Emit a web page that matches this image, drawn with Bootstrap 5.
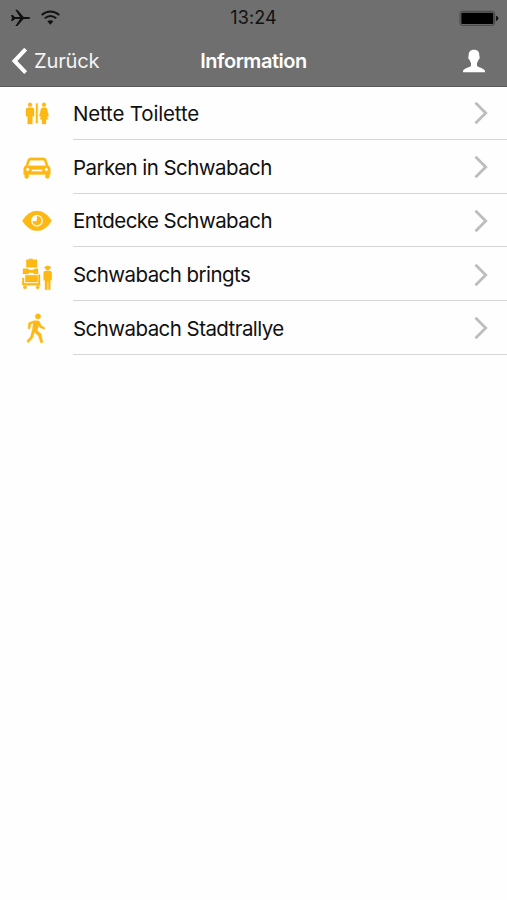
<!DOCTYPE html>
<html lang="de">
<head>
<meta charset="utf-8">
<meta name="viewport" content="width=device-width, initial-scale=1">
<title>Information</title>
<link href="https://cdn.jsdelivr.net/npm/bootstrap@5.3.0/dist/css/bootstrap.min.css" rel="stylesheet">
<style>
  body { font-family: Inter, "Liberation Sans", sans-serif; background: #fefefe; color: #111; height: 900px; overflow: hidden; }
  svg { display: block; flex: none; }
  .app-header { background: #6f6f6f; height: 87px; border-bottom: 1px solid #5a5a5a; }
  .status-bar { height: 34px; color: #111; }
  .status-time { font-size: 18px; line-height: 36px; letter-spacing: .1px; }
  .title-bar { height: 52px; color: #fff; }
  .back-link { font-size: 20.2px; line-height: 54px; letter-spacing: -.25px; color: #f4f4f4; }
  .page-title { font-size: 20px; line-height: 54px; font-weight: 600; letter-spacing: -.45px; }
  .menu-list { margin-top: -1px; }
  .menu-row { height: 53.75px; padding-left: 15px; color: #111; }
  .menu-row svg.glyph { fill: #fdb813; stroke: #fdb813; stroke-width: 1; margin-top: 2px; }
  .menu-text { margin-left: 13px; height: 53.75px; border-bottom: 1.5px solid #d6d6d6; font-size: 20.5px; line-height: 55px; padding: 2px 18px 0 0; }
  .menu-text span { letter-spacing: -.56px; white-space: nowrap; }
  .menu-row:first-child span { letter-spacing: -.16px; }
</style>
</head>
<body>
<header class="app-header">
  <div class="status-bar row g-0 align-items-center">
    <div class="col d-flex align-items-center">
      <svg width="75" height="34" viewBox="0 0 225 102" fill="#111">
        <path d="M33 42h5l7 6h15L46 26h6l19 22h12q8 0 8 3t-8 3H71L52 75h-6l14-21H45l-7 6h-5l3-9z"/>
        <g fill="none" stroke="#111" stroke-width="5.5"><path d="M125 42q26-21 53 0"/><path d="M134 52q17-14 35 0"/></g>
        <path d="M142 61q9-7 18 0l-9 10z"/>
      </svg>
    </div>
    <div class="col-auto status-time">13:24</div>
    <div class="col d-flex justify-content-end">
      <svg width="67" height="34" viewBox="0 0 201 102"><rect x="60" y="31" width="104" height="42" rx="7" fill="none" stroke="#444" stroke-width="3"/><rect x="64" y="35" width="96" height="34" rx="3" fill="#000"/><path d="M168 44q7 2 7 8t-7 8z" fill="#111"/></svg>
    </div>
  </div>
  <div class="title-bar row g-0 align-items-center">
    <div class="col d-flex align-items-center">
      <svg width="34" height="52" viewBox="0 34.8 34 52" fill="none" stroke="#fff" stroke-width="4"><path d="M25.7 49 14.5 60.8l11.2 11.7"/></svg>
      <span class="back-link">Zurück</span>
    </div>
    <h1 class="col-auto page-title m-0">Information</h1>
    <div class="col d-flex justify-content-end">
      <svg width="67" height="52" viewBox="0 104 201 156" fill="#fff"><path d="M102 148c12 0 17 8 16 20 3 2 1 9-3 11-1 5-3 7-4 9v8c3 6 24 7 24 17v3H69v-3c0-10 21-11 24-17v-8c-1-2-3-4-4-9-4-2-6-9-3-11-1-12 4-20 16-20z"/></svg>
    </div>
  </div>
</header>
<main class="menu-list d-flex flex-column">
  <a class="menu-row d-flex align-items-center text-decoration-none" href="#">
    <svg class="glyph" width="45" height="40" viewBox="0 -4 135 120"><circle cx="45" cy="28" r="6"/><path d="M39 37h12q6 0 6 6v20h-5v23H38V63h-5V43q0-6 6-6z"/><rect x="63" y="24" width="5" height="60" rx="2"/><circle cx="87" cy="28" r="6"/><path d="M83 37h8q4 0 5 4l5 21-5 2 3 8h-6v14H81V72h-6l3-8-5-2 5-21q1-4 5-4z"/></svg>
    <div class="menu-text flex-grow-1 d-flex justify-content-between align-items-center"><span>Nette Toilette</span><svg width="18" height="26" viewBox="0 0 18 26" fill="none" stroke="#bdbdbd" stroke-width="2.8"><path d="m4.5 2.8 10.2 10.2-10.2 10.2"/></svg></div>
  </a>
  <a class="menu-row d-flex align-items-center text-decoration-none" href="#">
    <svg class="glyph" width="45" height="40" viewBox="0 -2.6 135 120"><path fill-rule="evenodd" d="M46 27h40q5 0 8 6l6 18q6 2 6 9v17h-3v7q0 5-6 5t-6-5v-7H41v7q0 5-6 5t-6-5v-7h-3V60q0-7 6-9l6-18q3-6 8-6zm2 7q-3 0-4 3l-5 14h54l-5-14q-1-3-4-3zM38 57a5 5 0 100 10 5 5 0 000-10zm56 0a5 5 0 100 10 5 5 0 000-10zM50 62v6h32v-6z"/></svg>
    <div class="menu-text flex-grow-1 d-flex justify-content-between align-items-center"><span>Parken in Schwabach</span><svg width="18" height="26" viewBox="0 0 18 26" fill="none" stroke="#bdbdbd" stroke-width="2.8"><path d="m4.5 2.8 10.2 10.2-10.2 10.2"/></svg></div>
  </a>
  <a class="menu-row d-flex align-items-center text-decoration-none" href="#">
    <svg class="glyph" width="45" height="40" viewBox="0 -3 135 120"><path fill-rule="evenodd" d="M22 56Q40 27 66 27t44 29Q92 86 66 86T22 56zM66 38a18 18 0 100 36 18 18 0 000-36z"/><path d="M66 43v12q0 3-3 3H53a13 13 0 1013-15z"/></svg>
    <div class="menu-text flex-grow-1 d-flex justify-content-between align-items-center"><span>Entdecke Schwabach</span><svg width="18" height="26" viewBox="0 0 18 26" fill="none" stroke="#bdbdbd" stroke-width="2.8"><path d="m4.5 2.8 10.2 10.2-10.2 10.2"/></svg></div>
  </a>
  <a class="menu-row d-flex align-items-center text-decoration-none" href="#">
    <svg class="glyph" width="45" height="40" viewBox="0 -1 135 120"><path d="M34 13h7l3-4 3 4 4-4 3 4h12v23H34zM24 40h15l4 4h12l4-4h10v16H58l-4-4H43l-4 4H24zM31 60h37v20H31zM22 84h53v6H22zM22 68h5v20h-5zM70 58h5v31h-5z"/><circle cx="30" cy="96" r="5"/><circle cx="68" cy="96" r="5"/><circle cx="98" cy="38" r="7"/><path d="M88 35h20v3H88zM91 47h14q5 0 5 6v22h-4v28h-6V79h-3v24h-7V75h-4V53q0-6 5-6z"/></svg>
    <div class="menu-text flex-grow-1 d-flex justify-content-between align-items-center"><span>Schwabach bringts</span><svg width="18" height="26" viewBox="0 0 18 26" fill="none" stroke="#bdbdbd" stroke-width="2.8"><path d="m4.5 2.8 10.2 10.2-10.2 10.2"/></svg></div>
  </a>
  <a class="menu-row d-flex align-items-center text-decoration-none" href="#">
    <svg class="glyph" width="45" height="40" viewBox="0 1 135 120"><circle cx="69" cy="23" r="8"/><path d="M57 36h10q5 0 7 4l5 11 11 6-2 5-13-5-4-7-4 16 11 9 6 26-7 2-7-22-12-10-5 17-13 14-5-5 11-12 6-22 3-20-7 3-3 14h-6l2-18z"/></svg>
    <div class="menu-text flex-grow-1 d-flex justify-content-between align-items-center"><span>Schwabach Stadtrallye</span><svg width="18" height="26" viewBox="0 0 18 26" fill="none" stroke="#bdbdbd" stroke-width="2.8"><path d="m4.5 2.8 10.2 10.2-10.2 10.2"/></svg></div>
  </a>
</main>
<script src="https://cdn.jsdelivr.net/npm/bootstrap@5.3.0/dist/js/bootstrap.bundle.min.js"></script>
</body>
</html>
